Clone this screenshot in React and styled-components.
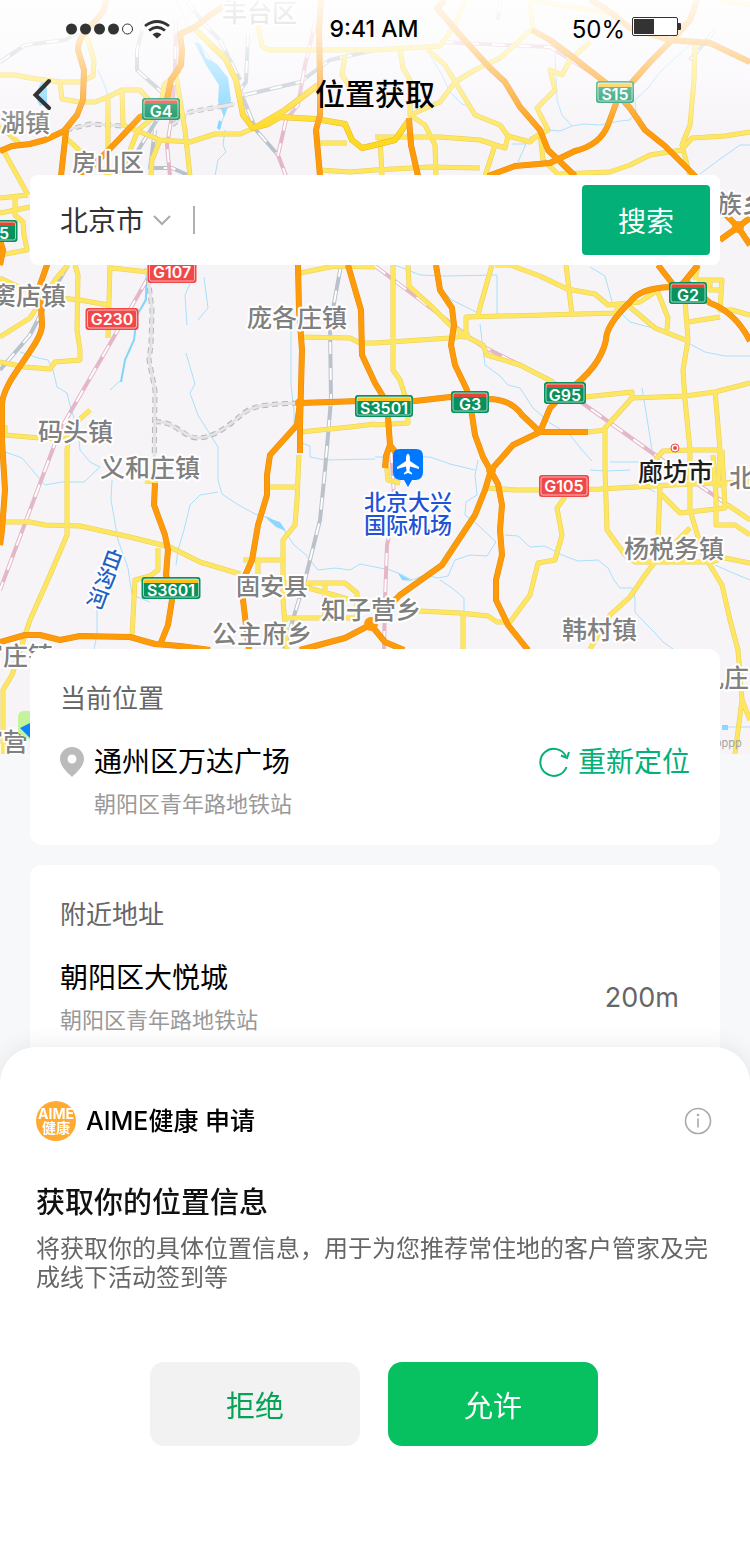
import React from 'react';
import styled, { createGlobalStyle, css } from 'styled-components';

const GlobalStyle = createGlobalStyle`
  * {
    box-sizing: border-box;
  }

  body {
    margin: 0;
    background: #f7f8fa;
  }

  body, button, input, select {
    font-family: Inter, "Noto Sans CJK SC", sans-serif;
  }

  h1, h2, p {
    margin: 0;
    padding: 0;
  }
`;

const Page = styled.div`
  position: relative;
  min-height: 100vh;
  overflow: hidden;
`;

const MapLayer = styled.div`
  position: absolute;
  top: 0;
  left: 0;
  right: 0;
  height: 754px;
  background: #f7f4f8;

  svg {
    display: block;
    width: 100%;
    height: 100%;
  }
`;

const Content = styled.div`
  position: relative;
`;

const StatusBar = styled.div`
  display: grid;
  grid-template-columns: 1fr auto 1fr;
  align-items: center;
  height: 58px;
  padding: 0 68px 0 66px;
  font-size: 24px;
  color: #000;
`;

const StatusGroup = styled.div`
  display: flex;
  align-items: center;
  justify-content: ${props => props.$end ? 'flex-end' : 'flex-start'};
  gap: ${props => props.$end ? '7px' : '10px'};
`;

const Clock = styled.span`
  font-size: 23px;
  font-weight: 500;
`;

const NavBar = styled.header`
  display: grid;
  grid-template-columns: 60px 1fr 60px;
  align-items: center;
  height: 72px;
  padding: 0 12px;
`;

const IconButton = styled.button`
  display: flex;
  align-items: center;
  justify-content: center;
  height: 44px;
  padding: 0;
  border: 0;
  background: none;
  cursor: pointer;
`;

const Title = styled.h1`
  font-size: 30px;
  line-height: 44px;
  font-weight: 500;
  text-align: center;
  color: #000;
`;

const SearchBar = styled.form`
  display: flex;
  align-items: center;
  height: 90px;
  margin: 45px 30px 0;
  padding: 10px 10px 10px 30px;
  border-radius: 8px;
  background: #fff;
`;

const CitySelect = styled.select`
  appearance: none;
  width: 86px;
  padding: 2px 0 0;
  border: 0;
  background: none;
  font-size: 28px;
  line-height: 40px;
  color: #333;
`;

const ChevronBox = styled.span`
  display: flex;
  margin-left: 7px;
`;

const Divider = styled.span`
  width: 2px;
  height: 28px;
  margin-left: 22px;
  background: #b0b0b0;
`;

const SearchInput = styled.input`
  flex: 1;
  min-width: 0;
  height: 60px;
  padding: 0 16px;
  border: 0;
  outline: 0;
  background: none;
  font-size: 28px;
`;

const SearchButton = styled.button`
  width: 128px;
  height: 70px;
  border: 0;
  border-radius: 4px;
  background: #03b077;
  font-size: 28px;
  color: #fff;
`;

const Cards = styled.main`
  display: grid;
  gap: 20px;
  margin-top: 384px;
  padding: 0 30px;
`;

const Card = styled.section`
  height: ${props => props.$tall ? '300px' : 'auto'};
  padding: 31px 30px 21px;
  border-radius: 12px;
  background: #fff;
`;

const CardTitle = styled.h2`
  font-size: 26px;
  line-height: 38px;
  font-weight: 400;
  color: #666;
`;

const PlaceRow = styled.div`
  display: flex;
  align-items: ${props => props.$center ? 'center' : 'flex-start'};
  margin-top: 22px;
`;

const PinBox = styled.span`
  display: flex;
  align-items: center;
  width: 34px;
  height: 44px;
`;

const Place = styled.div`
  flex: 1;
`;

const PlaceName = styled.p`
  font-size: 28px;
  line-height: 44px;
  color: #000;
`;

const PlaceAddress = styled.p`
  font-size: 22px;
  line-height: 40px;
  color: #999;
`;

const Distance = styled.span`
  padding-right: 11px;
  font-size: 27px;
  line-height: 44px;
  color: #666;
`;

const Relocate = styled.button`
  display: flex;
  align-items: center;
  gap: 8px;
  height: 44px;
  padding: 0;
  border: 0;
  background: none;
  font-size: 28px;
  line-height: 44px;
  color: #03b077;
`;

const Sheet = styled.section`
  position: fixed;
  left: 0;
  right: 0;
  bottom: 0;
  padding: 51px 38px 121px 36px;
  border-radius: 36px 36px 0 0;
  background: #fff;
  box-shadow: 0 0 24px rgba(0, 0, 0, 0.09);
`;

const SheetHead = styled.div`
  display: flex;
  align-items: center;
  height: 46px;
`;

const AppBadge = styled.span`
  display: flex;
  flex-direction: column;
  align-items: center;
  justify-content: center;
  width: 40px;
  height: 40px;
  margin-right: 10px;
  border-radius: 50%;
  background: #ffab33;
  font-size: 14px;
  line-height: 14px;
  font-weight: 700;
  color: #fff;
`;

const AppName = styled.span`
  flex: 1;
  font-size: 25px;
  line-height: 40px;
  font-weight: 500;
  color: #000;
`;

const SheetTitle = styled.h2`
  margin-top: 38px;
  font-size: 29px;
  line-height: 42px;
  font-weight: 500;
  color: #111;
`;

const SheetText = styled.p`
  margin-top: 10px;
  font-size: 24px;
  line-height: 29px;
  color: #666;
`;

const Actions = styled.div`
  display: flex;
  justify-content: center;
  gap: 28px;
  margin-top: 70px;
`;

const ActionButton = styled.button`
  width: 210px;
  height: 84px;
  border: 0;
  border-radius: 14px;
  background: #f2f2f2;
  font-size: 29px;
  color: #06a255;

  ${props => props.$primary && css`
    background: #07c160;
    color: #fff;
  `}
`;

const MapLabel = styled.text`
  font-family: Inter, "Noto Sans CJK SC", sans-serif;
  font-size: ${props => props.$size || 25}px;
  font-weight: 500;
  fill: ${props => props.$color || '#808080'};
  stroke: #fff;
  stroke-width: 4px;
  stroke-linejoin: round;
  paint-order: stroke;
`;

const ShieldText = styled.text`
  font-family: Inter, sans-serif;
  font-size: 16px;
  font-weight: 600;
  fill: #fff;
  text-anchor: middle;
`;

const rivers = [
  'M176 0L190 30L200 45L215 65L222 80L226 110L219 130',
  'M98 70L104 84L108 95L110 130',
  'M225 130L223 145L226 152L218 160L215 176',
  'M555 53L557 100L562 115L572 126L584 124L600 125L620 121L630 120L636 112L635 100L648 88L660 72L675 58L690 45',
  'M548 130L560 131L572 126',
  'M518 162L526 144L512 144',
  'M700 174L720 159L740 145H750',
  'M430 55L442 75L450 92L462 104L470 107',
  'M148 265L145 300L137 315L134 340L125 360L121 380L110 390',
  'M20 352L38 358L48 360L53 370L57 387L67 393L71 409L78 430L80 450L90 462L100 467',
  'M100 467L84 482L62 482L45 485L34 472L22 458L0 450',
  'M190 284L185 295L187 325',
  'M204 277L208 308L198 320',
  'M186 353L195 384L190 393L198 415L218 447V480L222 494L237 504L255 514L270 518L284 530L294 545L305 554L318 570L335 568L350 570L360 564L375 567',
  'M291 320V385L294 410V428',
  'M302 443L310 446V457L325 460L375 459',
  'M218 492L200 495L190 505L184 530L178 550L176 565',
  'M112 480L111 500L118 540L128 568L132 595L150 602',
  'M97 605V635L94 649',
  'M438 265L442 290L452 300L476 312',
  'M480 324L485 365L500 376L508 385L520 388L533 408L550 423L570 435L582 450L592 461',
  'M395 265L420 275L445 276L497 275V315',
  'M590 267L605 276L613 305L630 322L645 326L665 331L690 344L705 352L725 356H750',
  'M642 388L646 412L652 450',
  'M478 460L475 475L477 495L466 502L465 515L478 525L496 542L487 556L470 555L455 560L448 576L438 578L425 575L412 580L398 573L390 570L375 567',
  'M505 535L518 536L530 547L545 546L562 555L578 561L598 560L608 568L614 580L620 588L632 588L635 598V612L645 623L655 633L663 642L673 649',
  'M375 457L430 457L450 464L475 470',
  'M440 580L452 588L464 598V612',
  'M722 727H750',
  'M590 470L606 471L630 470M610 462H640L662 460',
  'M715 565L733 573L750 580M643 486L655 492',
];

const grayRails = [
  'M0 62L25 45L65 40L82 30',
  'M145 20L137 50V70L165 95L160 115L135 155',
  'M155 130L150 168H172L190 176',
  'M186 0L205 25L220 40L240 80',
  'M245 95L300 82L330 60L375 50',
  'M248 35L246 82L240 90L256 130L278 155',
  'M68 265L48 300L30 335L0 370',
  'M341 265L330 325L331 400L325 470L320 520L305 580L284 649',
  'M715 30L690 60',
  'M500 0L498 20',
];

const pinkRails = [
  'M316 20L305 65L298 105L286 120L278 155L286 176',
  'M176 20L175 70L172 115L167 145L170 176',
  'M148 278L60 430L0 590',
  'M375 266L480 345L550 380L665 462L750 520',
  'M391 450L395 510L387 545L385 600L384 650',
  'M440 42L550 47L600 78L640 120',
];

const metroLines = [
  'M66 130L90 124L123 126',
  'M172 125L190 112L235 104',
  'M147 268L152 310L151 345L149 360L155 390L154 478',
  'M155 422C175 420 183 438 198 438S230 425 240 416S260 404 300 403',
];

const yellowRoads = [
  'M0 75H15L30 78L60 82L80 82L93 76L94 60L88 40L82 32',
  'M60 82L62 99L80 102L95 102L110 96L122 90H140L160 112',
  'M122 90L123 125L140 132L160 140L190 142L215 134H240L254 128',
  'M176 75L180 100L185 130L190 176',
  'M180 70L164 85L160 112L138 130L120 176',
  'M160 140L152 160L151 176',
  'M108 98L108 176',
  'M65 137L90 160L110 176',
  'M0 126L20 144M3 150L28 195',
  'M0 198L28 195M0 213L30 207M15 198L15 215L23 222L24 235L27 250L0 255',
  'M257 20L262 46L268 50H375L440 46L455 25L465 0',
  'M320 143H347M320 170L350 172L375 170L430 167L480 168',
  'M345 55L342 75L352 90',
  'M375 137L440 137L480 140L505 148L508 136L530 142L540 133L543 160L560 176',
  'M400 50L403 68L410 80V115L425 125L435 145L436 176',
  'M428 50L445 65L460 90L475 115L500 125L508 136',
  'M410 115L440 102L455 82L475 70L500 58L520 40L533 28L530 0L620 15',
  'M590 42L570 60L562 75L550 70L555 90L537 108L548 130L530 140',
  'M695 40L694 80L690 125L682 145L690 176',
  'M684 147L692 138L725 136L750 132M682 150L650 155L630 165L610 172L560 174',
  'M495 145L485 176M380 137L382 176M720 0L750 5',
  'M492 265L482 300L478 315M466 340V317L617 313V304',
  'M408 265L409 286L430 305L450 325L467 337L483 345L487 355L520 365L553 382',
  'M393 265V370L400 380L408 405V423L375 425',
  'M375 343L450 338L470 335',
  'M495 265H510L540 276L567 289L595 294L608 305L640 302L655 292M566 265L572 315',
  'M630 307L655 328L688 341M657 290L668 318L667 330M685 300L688 340L683 370L685 400L690 450V510L705 560',
  'M697 280H722L720 310L732 310L750 315M710 280V290H722M688 322L720 317M695 280L698 265',
  'M585 397L632 392V398L685 396L715 392L750 383',
  'M632 398L605 428V470L607 530L625 555L635 562H710L725 558L750 563',
  'M588 432L605 430M715 390L720 450L718 488M655 460L663 451L690 450H720',
  'M488 488L515 490H560L600 489L690 484L750 482',
  'M565 497L557 508L562 535L555 560L538 563L530 595L510 622H497L488 616L460 613L400 610M463 614V649',
  'M660 487L658 540M660 493L680 513L725 508L722 450M690 528L665 553',
  'M713 455L716 495V525H735L750 535M728 505L750 520',
  'M655 562L645 575L630 597L610 615L590 649M708 562L722 585L730 620L738 650L742 700L735 754M742 700L750 720',
  'M0 362L25 367L50 369L55 362L80 360V350L77 330L78 275L75 265',
  'M0 337L30 318L55 280L68 265M110 265L108 338M112 268L148 272',
  'M60 298L80 300L108 305M0 278L25 290',
  'M5 425V435L40 438L72 439M90 410L70 428L67 450V535L50 575L30 620L12 675L3 690V754',
  'M5 522H30L45 525L80 526L130 537L170 547L200 562L240 574M158 548V570L150 576L135 580L132 636',
  'M300 337L350 338L360 343L375 343M300 273L335 266L375 267',
  'M300 432L350 427L375 424M299 455L297 500L295 525L283 540V600L287 649',
  'M243 560L283 560M258 558V574M268 487H297M285 583H345L357 593V615M283 618H355M305 587L348 599M325 585V617',
  'M386 460L388 480L400 483',
  'M145 481L158 482',
];

const goldRoads = [
  'M196 30L212 46L225 58L236 80L243 115L253 128L268 124L280 117L316 119L345 124L352 140L362 148L375 145L395 140L409 120',
  'M256 127L285 110L318 85',
];

const orangeRoads = [
  'M106 0C106 20 78 28 78 50L84 70L83 100L77 115L64 131L45 140L30 144L12 146L0 151',
  'M66 131L61 176L47 265L40 285L42 325C42 345 2 380 2 405L2 440L5 490L2 530L0 545',
  'M234 0L210 15L195 27L180 34L182 50L181 65L171 80L165 110L140 117L125 133L105 154L80 176',
  'M321 0L319 30L320 80V115L316 130L320 176L298 265L299 310L302 350L300 425V453',
  'M300 403L297 425L270 455L267 475V495L258 525L252 560L244 578L243 600L249 650',
  'M409 118L411 145L418 176M348 265L361 310L362 355L375 383L387 403L390 445L386 456L385 468M390 445L400 458',
  'M445 0L437 8L460 35L490 68L505 82L520 107L540 130L548 150L575 176',
  'M532 30L550 40L570 55L615 90L630 108L645 130L665 146L697 178',
  'M697 0L690 20L672 40L650 62L618 98L608 125Q600 145 575 151L550 163L515 166L488 176',
  'M590 0L605 8L630 28L670 40L710 43L750 62',
  'M436 265L440 290L452 308L454 325L451 345L455 365L467 390L472 415L475 435L483 457L498 484L502 505L500 530L502 555L496 580V600L508 625L528 650',
  'M300 403L360 401L415 401L450 397L490 399Q512 400 522 415L540 432H588',
  'M540 432L550 408L566 392Q600 368 606 340Q606 325 630 302Q640 288 670 287L688 283L710 303Q735 312 750 341',
  'M540 432L513 445L491 470L485 490L475 515L442 565L400 595L370 625L345 638L300 650M371 625L385 642L404 650',
  'M658 265L675 287M698 265L680 287M720 240L738 227L750 218M726 215L738 227L750 245M0 265L3 250L0 240',
  'M0 642L25 635H40L60 640L80 636L130 637L155 644L180 646L210 650',
  'M155 483L154 505L165 535L168 550L166 575L172 600L168 625L160 645',
];

const shields = [
  { name: 'G4', x: 161, y: 109, width: 38, band: '#e64536' },
  { name: 'S15', x: 615, y: 92, width: 38, band: '#fdbf1c' },
  { name: '5', x: 4, y: 231, width: 27, band: '#e64536' },
  { name: 'G107', x: 172, y: 272, width: 49, red: true },
  { name: 'G230', x: 112, y: 319, width: 53, red: true },
  { name: 'G2', x: 688, y: 293, width: 38, band: '#e64536' },
  { name: 'G95', x: 565, y: 393, width: 42, band: '#e64536' },
  { name: 'G3', x: 470, y: 402, width: 38, band: '#e64536' },
  { name: 'S3501', x: 384, y: 406, width: 58, band: '#fdbf1c' },
  { name: 'G105', x: 564, y: 486, width: 50, red: true },
  { name: 'S3601', x: 171, y: 588, width: 59, band: '#fdbf1c' },
];

const towns = [
  { name: '丰台区', x: 222, y: 22 },
  { name: '湖镇', x: 0, y: 132 },
  { name: '房山区', x: 72, y: 171, size: 24 },
  { name: '窦店镇', x: -9, y: 305 },
  { name: '庞各庄镇', x: 247, y: 327 },
  { name: '码头镇', x: 38, y: 441 },
  { name: '义和庄镇', x: 100, y: 477 },
  { name: '固安县', x: 236, y: 595, size: 24 },
  { name: '知子营乡', x: 321, y: 619 },
  { name: '公主府乡', x: 212, y: 643 },
  { name: '韩村镇', x: 562, y: 639 },
  { name: '杨税务镇', x: 624, y: 558 },
  { name: '廊坊市', x: 638, y: 481, color: '#1c1c1c' },
  { name: '北', x: 729, y: 487 },
  { name: '族乡', x: 717, y: 213 },
  { name: '官庄镇', x: -22, y: 665 },
  { name: '官营', x: -22, y: 751 },
  { name: '孔庄', x: 699, y: 687 },
  { name: '北京大兴', x: 364, y: 510, size: 22, color: '#1f52d6' },
  { name: '国际机场', x: 364, y: 533, size: 22, color: '#1f52d6' },
];

const Lines = ({ list, ...rest }) => (
  <g fill="none" strokeLinejoin="round" {...rest}>
    {list.map((d, index) => <path d={d} key={index}/>)}
  </g>
);

const Shield = ({ name, x, y, width, band, red }) => (
  <g transform={`translate(${x} ${y})`}>
    <rect x={-width / 2} y={-11} width={width} height={22} rx={3} fill={red ? '#f04848' : '#07915c'}/>
    {band && <rect x={-width / 2 + 2} y={-9} width={width - 4} height={4} fill={band}/>}
    <rect x={-width / 2 + 2} y={-9} width={width - 4} height={18} rx={2} fill="none" stroke="#fff" strokeOpacity={0.6}/>
    <ShieldText y={red ? 6 : 8}>{name}</ShieldText>
  </g>
);

const CityMap = () => (
  <svg viewBox="0 0 750 754" preserveAspectRatio="xMidYMin slice" role="img" aria-label="地图">
    <defs>
      <linearGradient id="fade" x1="0" y1="0" x2="0" y2="1">
        <stop offset="0" stopColor="#fff" stopOpacity="0.92"/>
        <stop offset="0.3" stopColor="#fff" stopOpacity="0.76"/>
        <stop offset="1" stopColor="#fff" stopOpacity="0"/>
      </linearGradient>
    </defs>
    <rect width="750" height="754" fill="#f7f4f8"/>
    <Lines list={rivers} stroke="#a9e0fb" strokeWidth="1"/>
    <path d="M194 42L200 44L206 58L217 64L228 78L231 100L224 117L218 102L219 85L206 65ZM219 120L222 122L220 130L217 128ZM42 80L47 88V103L40 106L35 96Z" fill="#7dd4ff"/>
    <path d="M265 517L280 522L286 531L276 527ZM398 573L412 581L402 580ZM722 725H728V730H722Z" fill="#8ad8ff"/>
    <path d="M147 268L146 300L137 315L134 340L125 360L121 382" fill="none" stroke="#86d4fb" strokeWidth="2"/>
    <Lines list={grayRails} stroke="#b9c2cb" strokeWidth="4"/>
    <Lines list={grayRails} stroke="#fff" strokeWidth="2" strokeDasharray="12 14"/>
    <Lines list={pinkRails} stroke="#e3b7c6" strokeWidth="4"/>
    <Lines list={pinkRails} stroke="#fff" strokeWidth="2" strokeDasharray="13 13"/>
    <Lines list={metroLines} stroke="#b7b7b9" strokeWidth="5" strokeDasharray="6 4"/>
    <Lines list={metroLines} stroke="#e3e2e6" strokeWidth="3"/>
    <Lines list={yellowRoads} stroke="#e5cf63" strokeWidth="5"/>
    <Lines list={yellowRoads} stroke="#ffe661" strokeWidth="4"/>
    <Lines list={goldRoads} stroke="#dfb626" strokeWidth="6"/>
    <Lines list={goldRoads} stroke="#ffd91f" strokeWidth="5"/>
    <Lines list={orangeRoads} stroke="#e18c13" strokeWidth="6"/>
    <Lines list={orangeRoads} stroke="#ff9b08" strokeWidth="5"/>
    <circle cx="300" cy="403" r="5" fill="#ff9b08"/>
    <circle cx="371" cy="624" r="7" fill="#ff9b08"/>
    <circle cx="491" cy="470" r="5" fill="#ff9b08"/>
    <circle cx="738" cy="227" r="6" fill="#ff9b08"/>
    {shields.map(shield => <Shield key={shield.name} {...shield}/>)}
    {towns.map(town => (
      <MapLabel key={town.name} x={town.x} y={town.y} $size={town.size} $color={town.color}>{town.name}</MapLabel>
    ))}
    <MapLabel x="100 93 85" y="563 582 602" rotate="20" $size={21} $color="#1c63c4">白沟河</MapLabel>
    <circle cx="675" cy="448" r="4" fill="#fff" stroke="#ee4a4a"/>
    <circle cx="675" cy="448" r="2" fill="#ee4a4a"/>
    <path d="M400 449H416Q423 449 423 456V472Q423 479 416 480L412 480L408 487L404 480L400 480Q393 479 393 472V456Q393 449 400 449Z" fill="#0078ff"/>
    <path d="M408 454C409.500 454 410 456 410 461L419 467V469L410 466.500L409.500 471L412 473V474.500L408 473L404 474.500V473L406.500 471L406 466.500L397 469V467L406 461C406 456 406.500 454 408 454Z" fill="#fff"/>
    <path d="M30 711H24Q18 711 18 717V733L30 740Z" fill="#c3f49b"/>
    <path d="M20 728L30 723V738Z" fill="#0a84ff"/>
    <text x="715" y="747" fontSize="11" fontFamily="Inter, sans-serif" fill="#a5a3a8">oppp</text>
    <rect width="750" height="135" fill="url(#fade)"/>
  </svg>
);

const SignalIcon = () => (
  <svg width="68" height="12" viewBox="0 0 68 12" aria-hidden="true">
    {[5.5, 19.5, 33.5, 47.5].map(cx => <circle key={cx} cx={cx} cy="6" r="5.500" fill="#333"/>)}
    <circle cx="61.500" cy="6" r="5" fill="#fff" stroke="#333"/>
  </svg>
);

const WifiIcon = () => (
  <svg width="26" height="19" viewBox="0 0 26 19" fill="none" stroke="#333" strokeWidth="2.800" aria-hidden="true">
    <path d="M1 6Q13 -3 25 6"/>
    <path d="M5 10.500Q13 4 21 10.500"/>
    <path d="M8.500 14.500Q13 10.500 17.500 14.500L13 18.500Z" fill="#333" stroke="none"/>
  </svg>
);

const BatteryIcon = () => (
  <svg width="50" height="24" viewBox="0 0 50 24" aria-hidden="true">
    <rect x="0.500" y="0.500" width="45" height="18" rx="1.500" fill="#fff" stroke="#333"/>
    <rect x="2" y="2" width="20" height="15" fill="#333"/>
    <path d="M46 6H48Q49 6 49 7V12Q49 13 48 13H46Z" fill="#333"/>
  </svg>
);

const BackIcon = () => (
  <svg width="20" height="32" viewBox="0 0 20 32" fill="none" stroke="#333" strokeWidth="4" aria-hidden="true">
    <path d="M17 3L3.500 17L17 30" strokeLinecap="round"/>
  </svg>
);

const ChevronIcon = () => (
  <svg width="18" height="12" viewBox="0 0 18 12" fill="none" stroke="#aaa" strokeWidth="2" aria-hidden="true">
    <path d="M1 2L9 10L17 2"/>
  </svg>
);

const PinIcon = () => (
  <svg width="24" height="30" viewBox="0 0 24 30" aria-hidden="true">
    <path fill="#bbb" fillRule="evenodd" d="M12 0C5.300 0 0 5.300 0 12C0 19 7 25 12 30C17 25 24 19 24 12C24 5.300 18.700 0 12 0ZM12 7.500A4.500 4.500 0 1 1 12 16.500A4.500 4.500 0 1 1 12 7.500Z"/>
  </svg>
);

const ReloadIcon = () => (
  <svg width="31" height="30" viewBox="0 0 31 30" fill="none" stroke="#03b077" strokeWidth="2" aria-hidden="true">
    <path d="M27.500 20A13.500 13.500 0 1 1 27 9.500"/>
    <path d="M30 5L28 11L22 8.500"/>
  </svg>
);

const InfoIcon = () => (
  <svg width="28" height="28" viewBox="0 0 28 28" fill="none" stroke="#aaa" strokeWidth="1.600" aria-hidden="true">
    <circle cx="14" cy="14" r="12.500"/>
    <path d="M14 11.500V20.500"/>
    <circle cx="14" cy="8" r="1.300" fill="#aaa" stroke="none"/>
  </svg>
);

export default function App() {
  return (
    <Page>
      <GlobalStyle/>
      <MapLayer>
        <CityMap/>
      </MapLayer>

      <Content>
        <StatusBar>
          <StatusGroup>
            <SignalIcon/>
            <WifiIcon/>
          </StatusGroup>
          <Clock>9:41 AM</Clock>
          <StatusGroup $end>
            <span>50%</span>
            <BatteryIcon/>
          </StatusGroup>
        </StatusBar>

        <NavBar>
          <IconButton type="button" aria-label="返回">
            <BackIcon/>
          </IconButton>
          <Title>位置获取</Title>
        </NavBar>

        <SearchBar onSubmit={event => event.preventDefault()}>
          <CitySelect aria-label="城市" defaultValue="北京市">
            <option>北京市</option>
          </CitySelect>
          <ChevronBox>
            <ChevronIcon/>
          </ChevronBox>
          <Divider/>
          <SearchInput type="text" aria-label="搜索地址"/>
          <SearchButton type="submit">搜索</SearchButton>
        </SearchBar>

        <Cards>
          <Card>
            <CardTitle>当前位置</CardTitle>
            <PlaceRow>
              <PinBox><PinIcon/></PinBox>
              <Place>
                <PlaceName>通州区万达广场</PlaceName>
                <PlaceAddress>朝阳区青年路地铁站</PlaceAddress>
              </Place>
              <Relocate type="button">
                <ReloadIcon/>
                重新定位
              </Relocate>
            </PlaceRow>
          </Card>

          <Card $tall>
            <CardTitle>附近地址</CardTitle>
            <PlaceRow $center>
              <Place>
                <PlaceName>朝阳区大悦城</PlaceName>
                <PlaceAddress>朝阳区青年路地铁站</PlaceAddress>
              </Place>
              <Distance>200m</Distance>
            </PlaceRow>
          </Card>
        </Cards>
      </Content>

      <Sheet role="dialog" aria-labelledby="sheet-title">
        <SheetHead>
          <AppBadge aria-hidden="true">
            <span>AIME</span>
            <span>健康</span>
          </AppBadge>
          <AppName>AIME健康 申请</AppName>
          <IconButton type="button" aria-label="说明">
            <InfoIcon/>
          </IconButton>
        </SheetHead>
        <SheetTitle id="sheet-title">获取你的位置信息</SheetTitle>
        <SheetText>将获取你的具体位置信息，用于为您推荐常住地的客户管家及完成线下活动签到等</SheetText>
        <Actions>
          <ActionButton type="button">拒绝</ActionButton>
          <ActionButton type="button" $primary>允许</ActionButton>
        </Actions>
      </Sheet>
    </Page>
  );
}
